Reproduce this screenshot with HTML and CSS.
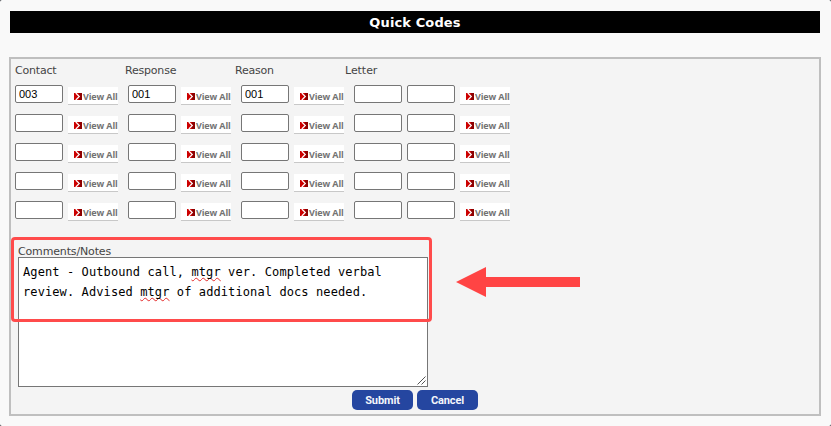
FILE: index.html
```html
<!DOCTYPE html>
<html lang="en">
<head>
<meta charset="utf-8">
<title>Quick Codes</title>
<link rel="stylesheet" href="styles.css">
</head>
<body>
<svg class="defs" width="0" height="0"><defs>
<symbol id="go" viewBox="0 0 8 7"><path fill="#cc0000" d="M0 0h8v7H0z"/><path fill="#8e0000" d="M5 0h3v7H5z"/><path d="M1.8 0 5.3 3.5 1.8 7" fill="none" stroke="#fff" stroke-width="1.2"/></symbol>
</defs></svg>
<main class="page">
<h1 class="title"><span>Quick Codes</span></h1>
<form class="panel">
<div class="heads"><span class="contact">Contact</span><span class="response">Response</span><span class="reason">Reason</span><span class="letter">Letter</span></div>
<div class="codes" id="codes"></div>
<label class="notes-label"><span>Comments/Notes</span></label>
<div class="notes" role="textbox" aria-multiline="true">Agent - Outbound call, <span class="misspelt">mtgr</span> ver. Completed verbal<br>review. Advised <span class="misspelt">mtgr</span> of additional docs needed.<svg class="grip" width="9" height="9" viewBox="0 0 9 9"><path d="M.5 8.5l8-8M4.5 8.5l4-4" fill="none" stroke="#555" stroke-width="1"/></svg></div>
<div class="actions"><button type="button">Submit</button><button type="button">Cancel</button></div>
</form>
<div class="highlight"></div>
<svg class="arrow" width="124" height="30" viewBox="0 0 124 30"><path fill="#ff4444" d="M0 15 30 0v10h94v10H30v10z"/></svg>
</main>
<script src="codes.js"></script>
</body>
</html>
```
FILE: styles.css
```css
* { box-sizing: border-box; }
html { background: #33363c; }
body { margin: 0; overflow: hidden; font-family: "DejaVu Sans", sans-serif; font-size: 11px; color: #444; }
.defs { position: absolute; }
.page { position: relative; height: 426px; padding: 11px 10px 0 9px; background: #f9f9f9; border-radius: 2px; }
.title { margin: 0 1px 24px; height: 22px; background: #000; color: #fff; font-size: 13px; line-height: 24px; text-align: center; font-weight: bold; }
.title span { letter-spacing: .12px; }
.panel { height: 359px; border: 2px solid #bfbfbf; background: #f4f4f4; padding: 4px 0 0 4px; }
.heads { display: grid; grid-template-columns: repeat(4, 110px); height: 22px; line-height: 15px; letter-spacing: -.2px; }
.letter { letter-spacing: -.05px; }
.codes { display: grid; row-gap: 11px; }
.row { display: flex; gap: 10px; height: 18px; }
.cell { display: flex; gap: 5px; }
.code { width: 48px; height: 18px; padding: 0 3px; border: 1px solid #767676; border-radius: 2px; background: #fff; font: 11px "Liberation Sans", sans-serif; color: #000; }
.view { width: 50px; height: 18px; margin-top: 2px; padding-left: 6px; display: flex; align-items: center; gap: 1px; background: #fff; border-bottom: 1px solid #c8c8c8; color: #737373; font: bold 9px/17px "Open Sans", sans-serif; letter-spacing: -.12px; white-space: nowrap; }
.view svg { flex: none; width: 8px; height: 7px; margin-top: 2px; }
.view span { margin-top: 2px; }
.notes-label { display: block; margin: 24px 0 0 3px; height: 14px; line-height: 18px; letter-spacing: -.15px; }
.notes { position: relative; width: 410px; height: 130px; margin-left: 3px; padding: 4px; border: 1px solid #767676; background: #fff; color: #000; font: 12px/20px "DejaVu Sans Mono", monospace; letter-spacing: .1px; white-space: nowrap; }
.misspelt { text-decoration: underline wavy #e32b2b 1px; text-decoration-skip-ink: none; text-underline-offset: 1px; }
.grip { position: absolute; right: 1px; bottom: 1px; }
.actions { display: flex; gap: 4px; margin: 3px 0 0 337px; }
.actions button { width: 61px; height: 20px; padding: 0; border: 0; border-radius: 5px; background: #2546a0; color: #f4f6fb; font: bold 11px "Roboto", sans-serif; letter-spacing: -.1px; }
.highlight { position: absolute; left: 11px; top: 237px; width: 421px; height: 85px; border: 3px solid #ff4b4b; border-radius: 4px; }
.arrow { position: absolute; left: 456px; top: 267px; }
```
FILE: codes.js
```js
const view = '<a class="view"><svg><use href="#go"/></svg><span>View All</span></a>';
const input = value => `<input class="code" value="${value}">`;
const rows = [['003', '001', '001'], ['', '', ''], ['', '', ''], ['', '', ''], ['', '', '']];
document.getElementById('codes').innerHTML = rows.map(row =>
  `<div class="row">${row.map(v => `<div class="cell">${input(v)}${view}</div>`).join('')}<div class="cell">${input('')}${input('')}${view}</div></div>`
).join('');
```
